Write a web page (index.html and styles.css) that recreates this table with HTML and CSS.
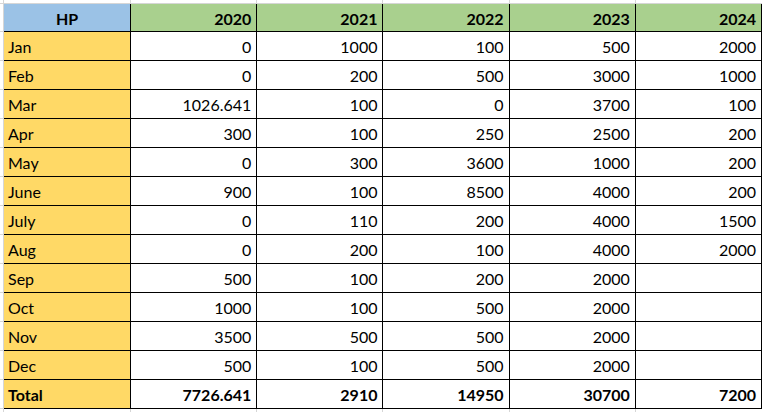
FILE: index.html
```html
<!DOCTYPE html>
<html lang="en">
<head>
<meta charset="utf-8">
<title>HP</title>
<link rel="stylesheet" href="styles.css">
</head>
<body>
<table class="sheet">
  <colgroup>
    <col class="c-gutter">
    <col class="c-label">
    <col class="c-year"><col class="c-year"><col class="c-year"><col class="c-year"><col class="c-year">
  </colgroup>
  <tbody>
    <tr class="edge-top"><td class="g"></td><td></td><td></td><td></td><td></td><td></td><td></td></tr>
    <tr class="head">
      <td class="g"></td>
      <th class="hp">HP</th>
      <th class="yr">2020</th><th class="yr">2021</th><th class="yr">2022</th><th class="yr">2023</th><th class="yr">2024</th>
    </tr>
    <tr><td class="g"></td><td class="m">Jan</td><td class="n">0</td><td class="n">1000</td><td class="n">100</td><td class="n">500</td><td class="n">2000</td></tr>
    <tr><td class="g"></td><td class="m">Feb</td><td class="n">0</td><td class="n">200</td><td class="n">500</td><td class="n">3000</td><td class="n">1000</td></tr>
    <tr><td class="g"></td><td class="m">Mar</td><td class="n">1026.641</td><td class="n">100</td><td class="n">0</td><td class="n">3700</td><td class="n">100</td></tr>
    <tr><td class="g"></td><td class="m">Apr</td><td class="n">300</td><td class="n">100</td><td class="n">250</td><td class="n">2500</td><td class="n">200</td></tr>
    <tr><td class="g"></td><td class="m">May</td><td class="n">0</td><td class="n">300</td><td class="n">3600</td><td class="n">1000</td><td class="n">200</td></tr>
    <tr><td class="g"></td><td class="m">June</td><td class="n">900</td><td class="n">100</td><td class="n">8500</td><td class="n">4000</td><td class="n">200</td></tr>
    <tr><td class="g"></td><td class="m">July</td><td class="n">0</td><td class="n">110</td><td class="n">200</td><td class="n">4000</td><td class="n">1500</td></tr>
    <tr><td class="g"></td><td class="m">Aug</td><td class="n">0</td><td class="n">200</td><td class="n">100</td><td class="n">4000</td><td class="n">2000</td></tr>
    <tr><td class="g"></td><td class="m">Sep</td><td class="n">500</td><td class="n">100</td><td class="n">200</td><td class="n">2000</td><td class="n"></td></tr>
    <tr><td class="g"></td><td class="m">Oct</td><td class="n">1000</td><td class="n">100</td><td class="n">500</td><td class="n">2000</td><td class="n"></td></tr>
    <tr><td class="g"></td><td class="m">Nov</td><td class="n">3500</td><td class="n">500</td><td class="n">500</td><td class="n">2000</td><td class="n"></td></tr>
    <tr><td class="g"></td><td class="m">Dec</td><td class="n">500</td><td class="n">100</td><td class="n">500</td><td class="n">2000</td><td class="n"></td></tr>
    <tr class="total"><td class="g"></td><td class="m">Total</td><td class="n">7726.641</td><td class="n">2910</td><td class="n">14950</td><td class="n">30700</td><td class="n">7200</td></tr>
    <tr class="edge-bottom"><td class="g"></td><td></td><td></td><td></td><td></td><td></td><td></td></tr>
  </tbody>
</table>
</body>
</html>
```

FILE: styles.css
```css
html, body {
  margin: 0;
  padding: 0;
  background: #ffffff;
}

body {
  width: 762px;
  height: 412px;
  overflow: hidden;
  font-family: Lato, "Open Sans", sans-serif;
  font-size: 16px;
  color: #000000;
}

.sheet {
  border-collapse: separate;
  border-spacing: 0;
  table-layout: fixed;
  width: 762px;
}

.c-gutter { width: 4px; }
.c-label { width: 127px; }
.c-year { width: 126px; }

.sheet td,
.sheet th {
  box-sizing: border-box;
  padding: 0;
  border-right: 1px solid #000000;
  border-bottom: 1px solid #000000;
  background: #ffffff;
  white-space: nowrap;
  overflow: hidden;
  line-height: 18px;
  vertical-align: middle;
}

.sheet tr { height: 29px; }
.sheet tr.head { height: 28px; }
.sheet tr.edge-top { height: 4px; }
.sheet tr.edge-bottom { height: 3px; }

.sheet td.g {
  border-right: 1px solid #d6d6d6;
  border-bottom: 1px solid #d6d6d6;
  background: #ffffff;
}

.sheet tr.edge-top td {
  height: 4px;
  line-height: 0;
  border-right: 1px solid #d6d6d6;
  border-bottom: 1px solid #d6d6d6;
}

.sheet tr.edge-bottom td {
  height: 3px;
  line-height: 0;
  border-right: 1px solid #d6d6d6;
  border-bottom: 0;
}

.sheet tr.edge-top td:last-child,
.sheet tr.edge-bottom td:last-child { border-right: 0; }

.sheet .hp {
  background: #9bc2e6;
  font-weight: 700;
  text-align: center;
  padding-top: 2px;
}

.sheet .yr {
  background: #a9d08e;
  font-weight: 700;
  text-align: right;
  padding-right: 5px;
  padding-top: 2px;
}

.sheet .m {
  background: #ffd966;
  text-align: left;
  padding-left: 4px;
  padding-top: 2px;
}

.sheet .n {
  text-align: right;
  padding-right: 5px;
  padding-top: 2px;
}

.sheet tr.total td { font-weight: 700; }
```
